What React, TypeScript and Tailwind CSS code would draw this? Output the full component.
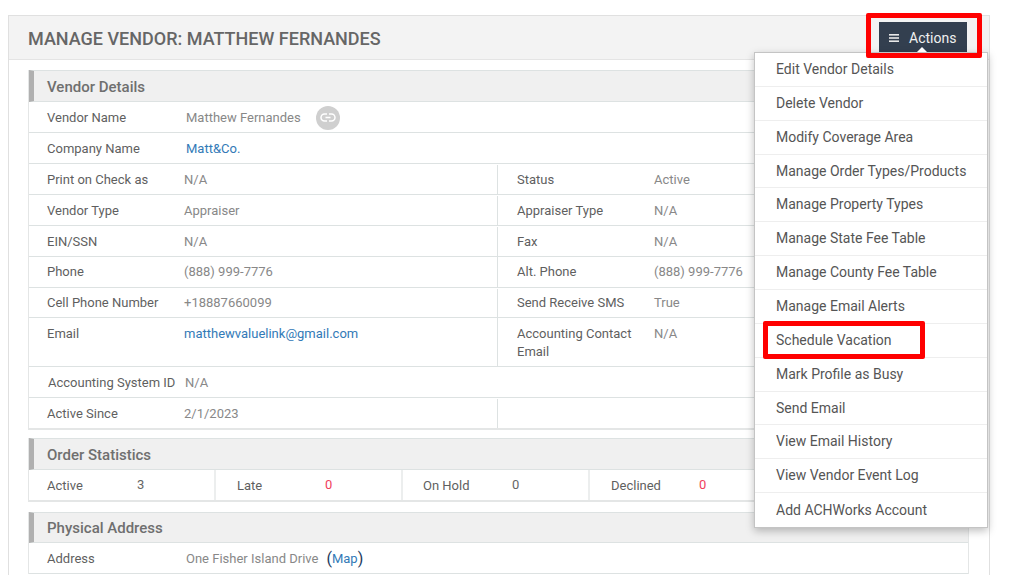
import React from 'react';

const menuItems = [
  'Edit Vendor Details',
  'Delete Vendor',
  'Modify Coverage Area',
  'Manage Order Types/Products',
  'Manage Property Types',
  'Manage State Fee Table',
  'Manage County Fee Table',
  'Manage Email Alerts',
  'Schedule Vacation',
  'Mark Profile as Busy',
  'Send Email',
  'View Email History',
  'View Vendor Event Log',
  'Add ACHWorks Account',
];

const SectionHeader = ({ title, h = 'h-[32px] pt-[3px]' }: { title: string; h?: string }) => (
  <div className={`${h} bg-[#f0f0f0] border-t border-b border-[#dde2e2] border-l-[5px] border-l-[#b0b0b0] pl-[13px] flex items-center text-[15px] font-medium text-[#6f6f6f]`}>
    {title}
  </div>
);

const Label = ({ children, className = '' }: { children: React.ReactNode; className?: string }) => (
  <div className={`text-[13px] leading-[18px] text-[#5f5f5f] ${className}`}>{children}</div>
);

const Value = ({ children, className = '' }: { children: React.ReactNode; className?: string }) => (
  <div className={`text-[13px] leading-[18px] text-[#888] ${className}`}>{children}</div>
);

const FullRow = ({ label, children, labelClass = 'w-[139px] ml-0' }: { label: string; children: React.ReactNode; labelClass?: string }) => (
  <div className="h-[31px] pt-[1px] flex items-center border-b border-[#dde2e2] pl-[18px]">
    <Label className={`shrink-0 ${labelClass}`}>{label}</Label>
    {children}
  </div>
);

const SplitRow = ({ l, lv, r, rv, h = 'h-[31px] pt-[1px]' }: { l: string; lv: React.ReactNode; r?: string; rv?: string; h?: string }) => (
  <div className={`${h} flex border-b border-[#dde2e2] last:border-b-0`}>
    <div className="w-[469px] flex items-center pl-[18px] border-r border-[#dde2e2] shrink-0">
      <Label className="w-[137px] shrink-0">{l}</Label>
      <Value>{lv}</Value>
    </div>
    <div className="flex-1 flex items-center pl-[19px]">
      <Label className="w-[137px] shrink-0">{r}</Label>
      <Value>{rv}</Value>
    </div>
  </div>
);

const Stat = ({ label, value, red, w, labelClass }: { label: string; value: string; red?: boolean; w: string; labelClass: string }) => (
  <div className={`${w} shrink-0 flex items-center pt-[1px] border-r-2 border-[#eceeee]`}>
    <Label className={`shrink-0 ${labelClass}`}>{label}</Label>
    <div className={`text-[13px] -mt-[2px] ${red ? 'text-[#f0405c]' : 'text-[#666]'}`}>{value}</div>
  </div>
);

export default function App() {
  return (
    <div className="relative w-[1024px] h-[575px] overflow-hidden bg-white" style={{ fontFamily: 'Roboto, sans-serif' }}>
      <div className="ml-[8px] mt-[15px] w-[982px] h-[600px] border border-[#e0e0e0]">
        <div className="h-[44px] pt-[2px] bg-[#f3f3f3] border-b border-[#e4e4e4] pl-[19px] flex items-center text-[18px] font-medium text-[#666]">
          MANAGE VENDOR: MATTHEW FERNANDES
        </div>
        <div className="pt-[10px] pl-[19px] pr-[20px]">
          <div className="border-l border-r border-b-2 border-[#e4e6e6]">
            <SectionHeader title="Vendor Details" />
            <FullRow label="Vendor Name">
              <Value>Matthew Fernandes</Value>
              <span className="ml-[15px] w-[24px] h-[24px] rounded-full bg-[#cfcfcf] flex items-center justify-center">
                <svg width="16" height="9" viewBox="0 0 16 9" fill="none" stroke="#fff" strokeWidth="1.5">
                  <path d="M7 1H4.5a3.5 3.5 0 0 0 0 7H7M9 1h2.5a3.5 3.5 0 0 1 0 7H9M5.5 4.5h5" />
                </svg>
              </span>
            </FullRow>
            <FullRow label="Company Name">
              <Value className="!text-[#337ab7]">Matt&amp;Co.</Value>
            </FullRow>
            <SplitRow l="Print on Check as" lv="N/A" r="Status" rv="Active" />
            <SplitRow l="Vendor Type" lv="Appraiser" r="Appraiser Type" rv="N/A" />
            <SplitRow l="EIN/SSN" lv="N/A" r="Fax" rv="N/A" />
            <SplitRow l="Phone" lv="(888) 999-7776" r="Alt. Phone" rv="(888) 999-7776" h="h-[31px]" />
            <SplitRow l="Cell Phone Number" lv="+18887660099" r="Send Receive SMS" rv="True" h="h-[30px] pt-[1px]" />
            <div className="h-[49px] flex border-b border-[#dde2e2]">
              <div className="w-[469px] flex items-start pt-[7px] pl-[18px] border-r border-[#dde2e2] shrink-0">
                <Label className="w-[137px] shrink-0">Email</Label>
                <Value className="!text-[#337ab7]">matthewvaluelink@gmail.com</Value>
              </div>
              <div className="flex-1 flex items-start pt-[7px] pl-[19px]">
                <Label className="w-[137px] shrink-0">Accounting Contact Email</Label>
                <Value>N/A</Value>
              </div>
            </div>
            <FullRow label="Accounting System ID" labelClass="w-[137px] ml-[1px]">
              <Value>N/A</Value>
            </FullRow>
            <SplitRow l="Active Since" lv="2/1/2023" h="h-[30px] pt-[1px]" />
          </div>

          <div className="mt-[8px] border-l border-r border-b-2 border-[#e4e6e6]">
            <SectionHeader title="Order Statistics" />
            <div className="h-[30px] flex">
              <Stat label="Active" value="3" w="w-[187px]" labelClass="w-[90px] ml-[18px]" />
              <Stat label="Late" value="0" red w="w-[187px]" labelClass="w-[88px] ml-[21px]" />
              <Stat label="On Hold" value="0" w="w-[187px]" labelClass="w-[89px] ml-[20px]" />
              <Stat label="Declined" value="0" red w="w-[187px]" labelClass="w-[88px] ml-[21px]" />
            </div>
          </div>

          <div className="mt-[10px] border-l border-r border-[#e4e6e6]">
            <SectionHeader title="Physical Address" h="h-[31px] pt-[1px]" />
            <FullRow label="Address">
              <Value>One Fisher Island Drive</Value>
              <span className="ml-[8px] text-[16px] text-[#1c3a5e]">(</span>
              <span className="text-[13px] text-[#337ab7]">Map</span>
              <span className="text-[16px] text-[#1c3a5e]">)</span>
            </FullRow>
          </div>
        </div>
      </div>

      <div className="absolute left-[879px] top-[22px] w-[88px] h-[32px] bg-[#333f4f] flex items-center pl-[10px] gap-[10px] text-[14px] text-[#f0f0f0]">
        <svg width="10" height="8" viewBox="0 0 10 8" fill="#e8e8e8">
          <rect width="10" height="1.6" />
          <rect y="3.2" width="10" height="1.6" />
          <rect y="6.4" width="10" height="1.6" />
        </svg>
        Actions
      </div>

      <div className="absolute left-[754px] top-[52px] w-[234px] border border-[#c4c4c4] bg-white shadow-[0_3px_8px_rgba(0,0,0,0.25)]">
        <div className="absolute left-[162px] -top-[6px] w-0 h-0 border-l-[5px] border-r-[5px] border-b-[5px] border-l-transparent border-r-transparent border-b-white" />
        {menuItems.map(item => (
          <div key={item} className="h-[33.86px] flex items-center pl-[21px] text-[14px] text-[#555] border-b border-[#eeeeee] last:border-b-0">
            {item}
          </div>
        ))}
      </div>

      <div className="absolute left-[866px] top-[13px] w-[116px] h-[45px] border-[5px] border-[#ff0000] rounded-[2px]" />
      <div className="absolute left-[763px] top-[321px] w-[162px] h-[38px] border-[5px] border-[#ff0000] rounded-[2px]" />
    </div>
  );
}
